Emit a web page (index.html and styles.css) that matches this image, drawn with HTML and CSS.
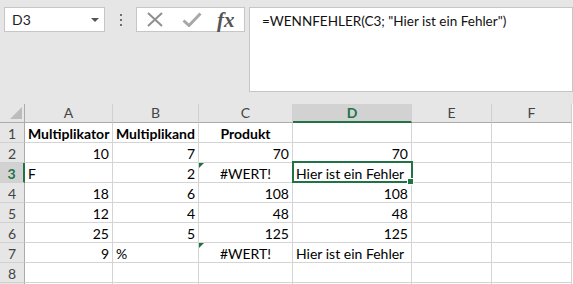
FILE: index.html
```html
<!DOCTYPE html>
<html lang="de">
<head>
  <meta charset="UTF-8">
  <meta name="viewport" content="width=device-width, initial-scale=1.0">
  <title>WENNFEHLER</title>
  <link rel="stylesheet" href="styles.css">
</head>
<body>
  <div class="toolbar">
    <div class="namebox">
      <span>D3</span>
      <span class="caret"></span>
    </div>
    <div class="grip"><i></i><i></i><i></i></div>
    <div class="fxbox">
      <svg class="icon" width="18" height="15" viewBox="0 0 18 15">
        <path d="M2 1 L16 14 M16 1 L2 14" stroke="#8f8f8f" stroke-width="2" fill="none"/>
      </svg>
      <svg class="icon" width="20" height="15" viewBox="0 0 20 15">
        <path d="M1.5 8.5 L7 13.5 L18.5 1.5" stroke="#a8a8a8" stroke-width="3" fill="none"/>
      </svg>
      <span class="fx">fx</span>
    </div>
    <div class="formula">=WENNFEHLER(C3; "Hier ist ein Fehler")</div>
  </div>

  <div class="sheet">
    <!-- Kopfzeile -->
    <div class="hd corner"></div>
    <div class="hd">A</div>
    <div class="hd">B</div>
    <div class="hd">C</div>
    <div class="hd active">D</div>
    <div class="hd">E</div>
    <div class="hd">F</div>

    <div class="rh">1</div>
    <div class="cell bold">Multiplikator</div>
    <div class="cell bold">Multiplikand</div>
    <div class="cell bold ctr">Produkt</div>
    <div class="cell"></div>
    <div class="cell"></div>
    <div class="cell"></div>

    <div class="rh">2</div>
    <div class="cell num">10</div>
    <div class="cell num">7</div>
    <div class="cell num">70</div>
    <div class="cell num">70</div>
    <div class="cell"></div>
    <div class="cell"></div>

    <div class="rh active">3</div>
    <div class="cell">F</div>
    <div class="cell num">2</div>
    <div class="cell ctr err">#WERT!</div>
    <div class="cell sel">Hier ist ein Fehler<span class="handle"></span></div>
    <div class="cell"></div>
    <div class="cell"></div>

    <div class="rh">4</div>
    <div class="cell num">18</div>
    <div class="cell num">6</div>
    <div class="cell num">108</div>
    <div class="cell num">108</div>
    <div class="cell"></div>
    <div class="cell"></div>

    <div class="rh">5</div>
    <div class="cell num">12</div>
    <div class="cell num">4</div>
    <div class="cell num">48</div>
    <div class="cell num">48</div>
    <div class="cell"></div>
    <div class="cell"></div>

    <div class="rh">6</div>
    <div class="cell num">25</div>
    <div class="cell num">5</div>
    <div class="cell num">125</div>
    <div class="cell num">125</div>
    <div class="cell"></div>
    <div class="cell"></div>

    <div class="rh">7</div>
    <div class="cell num">9</div>
    <div class="cell">%</div>
    <div class="cell ctr err">#WERT!</div>
    <div class="cell">Hier ist ein Fehler</div>
    <div class="cell"></div>
    <div class="cell"></div>

    <div class="rh">8</div>
    <div class="cell"></div>
    <div class="cell"></div>
    <div class="cell"></div>
    <div class="cell"></div>
    <div class="cell"></div>
    <div class="cell"></div>

    <div class="rh"></div>
    <div class="cell"></div>
    <div class="cell"></div>
    <div class="cell"></div>
    <div class="cell"></div>
    <div class="cell"></div>
    <div class="cell"></div>
  </div>
</body>
</html>
```

FILE: styles.css
```css
body {
  margin: 0;
  background-color: #e6e6e6;
  font-family: Lato, "Liberation Sans", sans-serif;
  color: #000;
  overflow: hidden;
  height: 284px;
}
.toolbar {
  display: flex;
  align-items: flex-start;
  box-sizing: border-box;
  height: 104px;
  padding: 7px 0 0 4px;
}
.namebox {
  box-sizing: border-box;
  width: 101px;
  height: 25px;
  background: #fff;
  border: 1px solid #c6c6c6;
  display: flex;
  align-items: center;
  justify-content: space-between;
  padding: 0 5px 0 7px;
  font-size: 14px;
  color: #222;
}
.caret {
  width: 0;
  height: 0;
  border-left: 4px solid transparent;
  border-right: 4px solid transparent;
  border-top: 4px solid #555;
}
.grip {
  width: 31px;
  display: flex;
  flex-direction: column;
  align-items: center;
  gap: 3px;
  padding-top: 7px;
}
.grip i {
  display: block;
  width: 2px;
  height: 2px;
  background: #6f6f6f;
}
.fxbox {
  box-sizing: border-box;
  width: 109px;
  height: 25px;
  background: #fff;
  border: 1px solid #c6c6c6;
  display: flex;
  align-items: center;
  padding-left: 9px;
  gap: 18px;
}
.fxbox .icon {
  display: block;
}
.fx {
  font-family: "Liberation Serif", serif;
  font-style: italic;
  font-weight: bold;
  font-size: 21px;
  color: #555;
  margin-left: -3px;
  line-height: 20px;
}
.formula {
  box-sizing: border-box;
  margin-left: 4px;
  width: 324px;
  height: 85px;
  background: #fff;
  border: 1px solid #c6c6c6;
  padding: 4px 12px;
  font-size: 13.5px;
  line-height: 18px;
  color: #111;
  white-space: nowrap;
}
.sheet {
  display: grid;
  grid-template-columns: 25px 88px 86px 94px 119px 80px 80px;
  grid-template-rows: 19px;
  grid-auto-rows: 20px;
  background: #fff;
}
.hd, .rh, .cell {
  box-sizing: border-box;
  font-size: 14px;
  line-height: 19px;
  white-space: nowrap;
}
.hd {
  background: #e6e6e6;
  border-right: 1px solid #d0d0d0;
  border-bottom: 1px solid #ababab;
  text-align: center;
  color: #444;
  line-height: 18px;
}
.hd.active {
  background: #d2d2d2;
  border-bottom: 2px solid #217346;
  color: #217346;
  font-weight: bold;
}
.corner {
  position: relative;
  border-right-color: #ababab;
}
.corner::after {
  content: "";
  position: absolute;
  right: 2px;
  bottom: 3px;
  border-left: 12px solid transparent;
  border-bottom: 12px solid #bcbcbc;
}
.rh {
  background: #e6e6e6;
  border-right: 1px solid #ababab;
  border-bottom: 1px solid #d0d0d0;
  text-align: center;
  color: #444;
  padding-top: 1px;
}
.rh.active {
  background: #d2d2d2;
  border-right: 2px solid #217346;
  color: #217346;
  font-weight: bold;
}
.cell {
  border-right: 1px solid #d4d4d4;
  border-bottom: 1px solid #d4d4d4;
  padding: 1px 3px 0;
}
.bold {
  font-weight: bold;
}
.num {
  text-align: right;
}
.ctr {
  text-align: center;
}
.err {
  position: relative;
}
.err::before {
  content: "";
  position: absolute;
  left: 0;
  top: 0;
  border-top: 5px solid #1e7145;
  border-right: 5px solid transparent;
}
.sel {
  position: relative;
}
.sel::after {
  content: "";
  position: absolute;
  left: -1px;
  top: -2px;
  right: -2px;
  bottom: -1px;
  border: 2px solid #217346;
}
.handle {
  position: absolute;
  right: -3px;
  bottom: -3px;
  width: 7px;
  height: 7px;
  box-sizing: border-box;
  border: 1px solid #fff;
  background: #217346;
  z-index: 2;
}
```
